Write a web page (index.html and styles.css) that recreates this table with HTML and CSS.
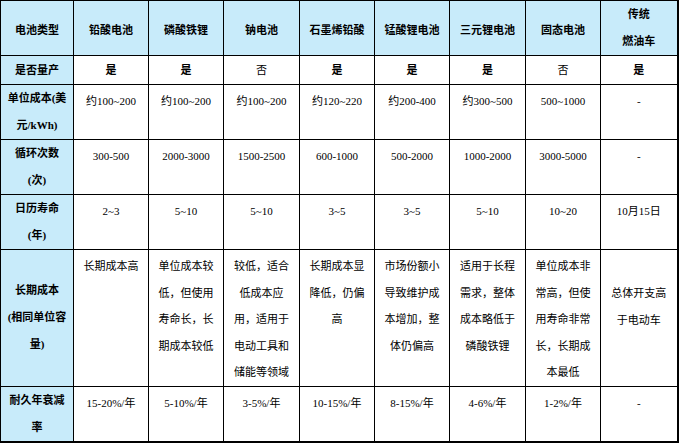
FILE: index.html
```html
<!DOCTYPE html>
<html lang="zh">
<head>
<meta charset="utf-8">
<link rel="stylesheet" href="styles.css">
</head>
<body>
<table class="cmp">
<colgroup>
<col class="c0"><col class="c1"><col class="c2"><col class="c3"><col class="c4"><col class="c5"><col class="c6"><col class="c7"><col class="c8">
</colgroup>
<tr class="head">
<th>电池类型</th><th>铅酸电池</th><th>磷酸铁锂</th><th>钠电池</th><th>石墨烯铅酸</th><th>锰酸锂电池</th><th>三元锂电池</th><th>固态电池</th><th class="two">传统<br>燃油车</th>
</tr>
<tr class="r2">
<th class="label">是否量产</th><td class="b">是</td><td class="b">是</td><td>否</td><td class="b">是</td><td class="b">是</td><td class="b">是</td><td>否</td><td class="b">是</td>
</tr>
<tr class="r3">
<th class="label">单位成本(美元/kWh)</th><td>约100~200</td><td>约100~200</td><td>约100~200</td><td>约120~220</td><td>约200-400</td><td>约300~500</td><td>500~1000</td><td>-</td>
</tr>
<tr class="r4">
<th class="label">循环次数<br>(次)</th><td>300-500</td><td>2000-3000</td><td>1500-2500</td><td>600-1000</td><td>500-2000</td><td>1000-2000</td><td>3000-5000</td><td>-</td>
</tr>
<tr class="r5">
<th class="label">日历寿命<br>(年)</th><td>2~3</td><td>5~10</td><td>5~10</td><td>3~5</td><td>3~5</td><td>5~10</td><td>10~20</td><td>10月15日</td>
</tr>
<tr class="r6">
<th class="label">长期成本<br>(相同单位容量)</th><td>长期成本高</td><td>单位成本较低，但使用寿命长，长期成本较低</td><td>较低，适合低成本应用，适用于电动工具和储能等领域</td><td>长期成本显降低，仍偏高</td><td>市场份额小导致维护成本增加，整体仍偏高</td><td>适用于长程需求，整体成本略低于磷酸铁锂</td><td>单位成本非常高，但使用寿命非常长，长期成本最低</td><td class="low">总体开支高于电动车</td>
</tr>
<tr class="r7">
<th class="label">耐久年衰减率</th><td>15-20%/年</td><td>5-10%/年</td><td>3-5%/年</td><td>10-15%/年</td><td>8-15%/年</td><td>4-6%/年</td><td>1-2%/年</td><td>-</td>
</tr>
</table>
</body>
</html>
```
FILE: styles.css
```css
html, body {
  margin: 0;
  padding: 0;
  background: #ffffff;
}
.cmp {
  border-collapse: collapse;
  table-layout: fixed;
  width: 677px;
  font-family: "Liberation Serif", "Noto Sans CJK SC", serif;
  font-size: 11px;
  line-height: 27px;
  color: #000;
}
.c0 { width: 73px; }
.c1 { width: 75px; }
.c2 { width: 75px; }
.c3 { width: 76px; }
.c4 { width: 75px; }
.c5 { width: 75px; }
.c6 { width: 76px; }
.c7 { width: 75px; }
.c8 { width: 77px; }
.cmp th, .cmp td {
  border: 1px solid #000;
  padding: 0 6px;
  text-align: center;
  word-break: break-all;
}
.cmp td {
  vertical-align: top;
  font-weight: normal;
}
.cmp td.b { font-weight: bold; }
.cmp th {
  font-weight: bold;
  vertical-align: middle;
}
.head th {
  background: #c8ebfa;
  padding-top: 5px;
}
.head th.two { padding-top: 0; }
.label {
  background: #c8ebfa;
}
.head { height: 55px; }
.r2 { height: 28px; }
.r2 th, .r2 td { padding-top: 1px; }
.r3 { height: 54px; }
.r4 { height: 54px; }
.r5 { height: 55px; }
.r6 { height: 136px; }
.r7 { height: 54px; }
.r3 td, .r4 td, .r5 td, .r7 td { padding-top: 3px; }
.r6 td {
  line-height: 26.6px;
  padding-top: 3px;
}
.cmp .r6 td.low { padding-top: 30px; }
.cmp tr:last-child th, .cmp tr:last-child td {
  border-bottom-width: 2px;
}
.cmp tr th:last-child, .cmp tr td:last-child {
  border-right-width: 2px;
}
```
